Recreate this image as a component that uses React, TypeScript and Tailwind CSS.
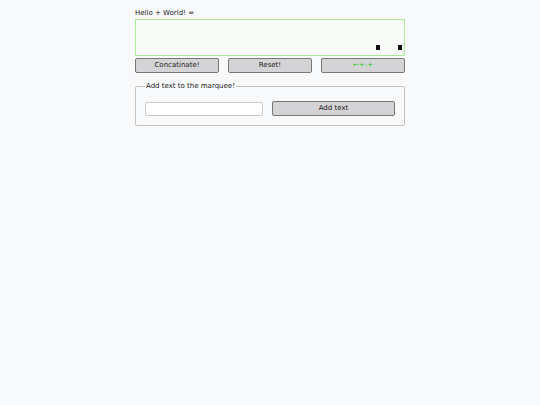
import { useState } from "react";

const font = { fontFamily: '"DejaVu Sans", sans-serif' };

export default function App() {
  const [text, setText] = useState("");

  return (
    <div className="min-h-[405px] w-full bg-[#f8f9fb] text-[#222]" style={font}>
      <div className="mx-auto w-[270px] pt-[9px]">
        <div className="text-[7px] leading-[9px]">Hello + World! =</div>
        <div className="mt-px flex h-[37px] items-end justify-end gap-[18px] border border-[#a8ec98] bg-[#f9fbf9] pr-[2px] pb-[5px]">
          <span className="h-[5px] w-[4px] bg-[#111]" />
          <span className="h-[5px] w-[4px] bg-[#111]" />
        </div>
        <div className="mt-[2px] grid grid-cols-3 gap-[9px]">
          <button className="h-[15px] rounded-[2px] border border-[#777] bg-[#d4d4d6] text-[7px] leading-none text-[#222]">
            Concatinate!
          </button>
          <button className="h-[15px] rounded-[2px] border border-[#777] bg-[#d4d4d6] text-[7px] leading-none text-[#222]">
            Reset!
          </button>
          <button className="h-[15px] rounded-[2px] border border-[#777] bg-[#d4d4d6] text-[7px] leading-none text-[#22cc22]">
            ←+-+
          </button>
        </div>
        <fieldset className="mt-[9px] rounded-[2px] border border-[#c4c4c4] px-[9px] pt-[10px] pb-[9px]">
          <legend className="px-[1px] text-[7px] leading-[9px]">Add text to the marquee!</legend>
          <div className="flex items-center gap-[9px]">
            <input
              value={text}
              onChange={(e) => setText(e.target.value)}
              className="h-[14px] w-[118px] rounded-[2px] border border-[#c8c8c8] bg-white px-1 text-[7px]"
            />
            <button className="h-[15px] flex-1 rounded-[2px] border border-[#777] bg-[#d4d4d6] text-[7px] leading-none text-[#222]">
              Add text
            </button>
          </div>
        </fieldset>
      </div>
    </div>
  );
}
